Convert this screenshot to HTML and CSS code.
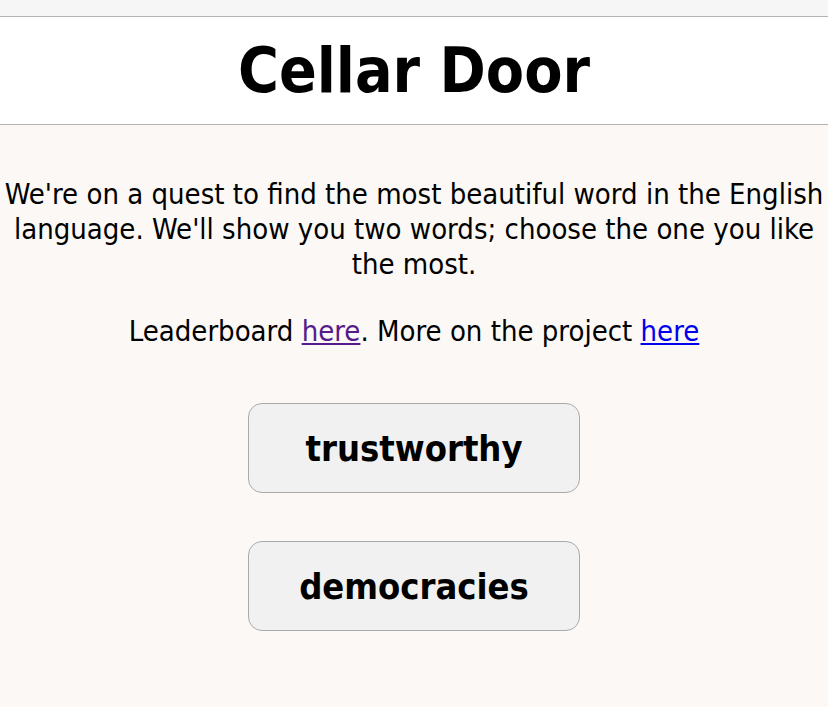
FILE: index.html
```html
<!DOCTYPE html>
<html lang="en">
<head>
<meta charset="UTF-8">
<meta name="viewport" content="width=device-width, initial-scale=1.0">
<title>Cellar Door</title>
<link rel="stylesheet" href="styles.css">
</head>
<body>
<div class="topbar"></div>
<header class="header">
  <h1>Cellar Door</h1>
</header>
<main class="content">
  <p class="intro">We're on a quest to find the most beautiful word in the English language. We'll show you two words; choose the one you like the most.</p>
  <p class="links">Leaderboard <a href="#" class="visited">here</a>. More on the project <a href="#">here</a></p>
  <div class="choices">
    <button class="word">trustworthy</button>
    <button class="word">democracies</button>
  </div>
</main>
</body>
</html>
```

FILE: styles.css
```css
body {
  font-family: 'DejaVu Sans Condensed', 'DejaVu Sans', sans-serif;
  font-stretch: condensed;
  background-color: #fbf8f5;
  margin: 0;
  color: #000;
}
.topbar {
  height: 16px;
  background-color: #f6f6f6;
  border-bottom: 1px solid #b3b3b3;
}
.header {
  background-color: #fff;
  border-bottom: 1px solid #b3b3b3;
  height: 107px;
  display: flex;
  align-items: center;
  justify-content: center;
}
h1 {
  margin: 0;
  font-size: 62px;
  font-weight: bold;
}
.content {
  text-align: center;
  padding-top: 52px;
}
.intro {
  font-size: 29px;
  line-height: 35px;
  margin: 0 auto;
}
.links {
  font-size: 29px;
  line-height: 35px;
  margin: 32px 0 0;
}
a {
  color: #0000ee;
}
a.visited {
  color: #551a8b;
}
.choices {
  display: flex;
  flex-direction: column;
  align-items: center;
  gap: 48px;
  margin-top: 54px;
}
.word {
  width: 332px;
  height: 90px;
  background-color: #f1f1f1;
  border: 1px solid #aaa;
  border-radius: 14px;
  font-family: inherit;
  font-size: 36px;
  font-weight: bold;
  color: #000;
  cursor: pointer;
}
```
